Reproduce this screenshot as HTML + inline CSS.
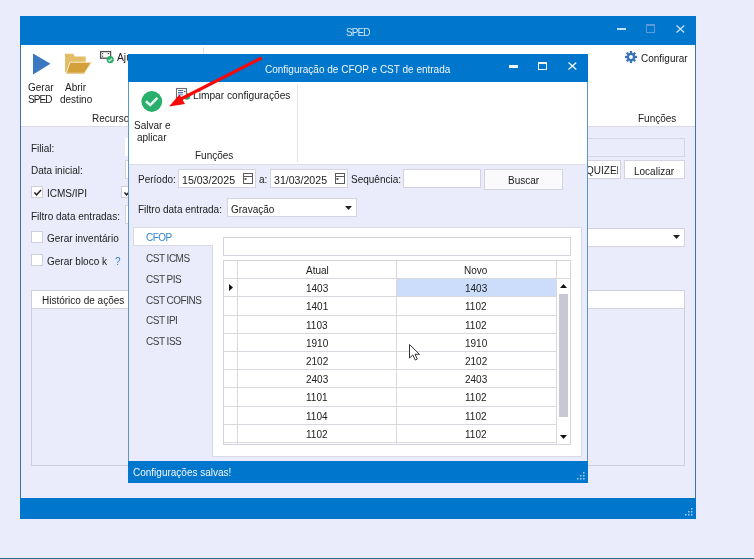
<!DOCTYPE html>
<html><head><meta charset="utf-8">
<style>
*{box-sizing:border-box;margin:0;padding:0}
html,body{width:754px;height:559px;overflow:hidden;background:#EAECFB;font-family:"Liberation Sans",sans-serif;font-size:10px;color:#202020}
.a{position:absolute}
.t{position:absolute;white-space:nowrap;line-height:14px;will-change:transform}
.tb{position:absolute;background:#fff;border:1px solid #D4D4E0}
.cb{position:absolute;width:12px;height:12px;background:#fff;border:1px solid #CFCFDC}
</style></head><body>

<!-- bottom taskbar line -->
<div class="a" style="left:0;top:558px;width:754px;height:1px;background:#2A6F9A"></div>

<!-- MAIN WINDOW -->
<div class="a" style="left:20px;top:16px;width:676px;height:503px;background:#EAECFB;border:1px solid #3E72A8"></div>
<div class="a" style="left:20px;top:16px;width:676px;height:29px;background:#0076CC"></div>
<div class="t" style="left:346px;top:25.5px;color:#CFE4F7;font-size:10px;letter-spacing:-0.9px">SPED</div>
<!-- window buttons -->
<div class="a" style="left:617px;top:27.5px;width:9px;height:2.5px;background:#BFE0FA"></div>
<div class="a" style="left:646px;top:24px;width:9px;height:9px;border:1px solid #5C9BD8;border-top-width:2px"></div>
<svg class="a" style="left:676px;top:25px" width="9" height="8"><path d="M0.5 0.5L8.2 7.5M8.2 0.5L0.5 7.5" stroke="#C6E2F8" stroke-width="1.3"/></svg>

<!-- main ribbon -->
<div class="a" style="left:21px;top:45px;width:674px;height:82px;background:#fff;border-bottom:1px solid #DCDCE8"></div>
<div class="a" style="left:203px;top:47px;width:1px;height:77px;background:#E2E2EA"></div>
<!-- play icon -->
<svg class="a" style="left:33px;top:53px" width="18" height="22"><path d="M0 0.5L17.5 10.8L0 21.5Z" fill="#3B78C2"/></svg>
<div class="t" style="left:28px;top:81px">Gerar</div>
<div class="t" style="left:28px;top:93px;letter-spacing:-0.9px">SPED</div>
<!-- folder icon -->
<svg class="a" style="left:64px;top:53px" width="29" height="21">
<path d="M1 0.7H9.5L10.5 3.6H21.7V10H1Z" fill="#E3BD68"/>
<path d="M1 2H9V19H1Z" fill="#E3BD68"/>
<path d="M6 9.2H27.6L20.6 20H2.2Z" fill="#D3A03A" stroke="#FFF6E0" stroke-width="0.9" stroke-linejoin="round"/>
<path d="M20.6 20H2.2" stroke="#D3A03A" stroke-width="1"/>
</svg>
<div class="t" style="left:65px;top:81px">Abrir</div>
<div class="t" style="left:60px;top:93px">destino</div>
<!-- ajuste icon -->
<svg class="a" style="left:99px;top:50px" width="16" height="15">
<rect x="1.6" y="1.6" width="10" height="6.6" fill="#fff" stroke="#505050" stroke-width="1.3"/>
<rect x="3" y="3" width="1.2" height="1.2" fill="#555"/><rect x="3" y="5.6" width="1.2" height="1.2" fill="#555"/><rect x="8.8" y="3" width="1.2" height="1.2" fill="#555"/>
<circle cx="11.2" cy="9.6" r="3.6" fill="#2EAD6A"/>
<path d="M9.4 9.8L10.7 11L13 8.6" stroke="#D8F5E4" stroke-width="1.1" fill="none"/>
</svg>
<div class="t" style="left:116.5px;top:51px;font-size:10.3px">Aju</div>
<div class="t" style="left:92px;top:111.5px">Recursos</div>
<!-- configurar -->
<svg class="a" style="left:624px;top:50px" width="14" height="14"><g transform="translate(7 7)"><circle r="4" fill="#3A72B8"/><rect x="-1.2" y="-6" width="2.4" height="3" fill="#3A72B8" transform="rotate(0)"/><rect x="-1.2" y="-6" width="2.4" height="3" fill="#3A72B8" transform="rotate(45)"/><rect x="-1.2" y="-6" width="2.4" height="3" fill="#3A72B8" transform="rotate(90)"/><rect x="-1.2" y="-6" width="2.4" height="3" fill="#3A72B8" transform="rotate(135)"/><rect x="-1.2" y="-6" width="2.4" height="3" fill="#3A72B8" transform="rotate(180)"/><rect x="-1.2" y="-6" width="2.4" height="3" fill="#3A72B8" transform="rotate(225)"/><rect x="-1.2" y="-6" width="2.4" height="3" fill="#3A72B8" transform="rotate(270)"/><rect x="-1.2" y="-6" width="2.4" height="3" fill="#3A72B8" transform="rotate(315)"/><circle r="1.9" fill="#fff"/></g></svg>
<div class="t" style="left:641px;top:52px">Configurar</div>
<div class="t" style="left:638px;top:112px">Funções</div>

<!-- main body controls -->
<div class="t" style="left:31px;top:142px">Filial:</div>
<div class="t" style="left:31px;top:164px">Data inicial:</div>
<div class="cb" style="left:31px;top:186px"></div>
<svg class="a" style="left:33px;top:189px" width="9" height="7"><path d="M1.4 3.4L3.6 5.8L8 1" stroke="#222" stroke-width="1.5" fill="none"/></svg>
<div class="t" style="left:47px;top:187px">ICMS/IPI</div>
<div class="cb" style="left:121px;top:186px"></div>
<svg class="a" style="left:123px;top:189px" width="9" height="7"><path d="M1.4 3.4L3.6 5.8L8 1" stroke="#222" stroke-width="1.5" fill="none"/></svg>
<div class="t" style="left:31px;top:210px">Filtro data entradas:</div>
<div class="tb" style="left:125px;top:205px;width:10px;height:19px"></div>
<div class="cb" style="left:31px;top:231px"></div>
<div class="t" style="left:47px;top:232px">Gerar inventário</div>
<div class="cb" style="left:31px;top:254px"></div>
<div class="t" style="left:47px;top:255px">Gerar bloco k</div>
<div class="t" style="left:115px;top:255px;color:#2F7FD0">?</div>
<div class="tb" style="left:125px;top:138px;width:10px;height:18px;border-color:#fff"></div>
<div class="tb" style="left:125px;top:160px;width:10px;height:19px"></div>

<div class="a" style="left:580px;top:138px;width:105px;height:19px;background:#EAECFB;border:1px solid #D6D6E2"></div>
<div class="tb" style="left:560px;top:160px;width:61px;height:19px"></div>
<div class="a" style="left:561px;top:161px;width:57px;height:17px;overflow:hidden"><div class="t" style="left:25px;top:3px">QUIZEN</div></div>
<div class="a" style="left:624px;top:160px;width:61px;height:19px;background:#fff;border:1px solid #D4D4E0"></div>
<div class="t" style="left:634px;top:165px">Localizar</div>
<div class="tb" style="left:560px;top:228px;width:125px;height:19px"></div>
<svg class="a" style="left:673px;top:235px" width="8" height="4"><path d="M0 0H7L3.5 4Z" fill="#222"/></svg>

<!-- historico -->
<div class="a" style="left:31px;top:290px;width:654px;height:176px;border:1px solid #CFCFDB;background:#EAECFB"></div>
<div class="a" style="left:32px;top:291px;width:652px;height:18px;background:#fff;border-bottom:1px solid #D6D6E2"></div>
<div class="t" style="left:42px;top:294px">Histórico de ações</div>

<!-- main status bar -->
<div class="a" style="left:20px;top:498px;width:676px;height:21px;background:#0076CC"></div>

<!-- DIALOG -->
<div class="a" style="left:128px;top:54px;width:460px;height:429px;background:#EAECFB;border:1px solid #5A96D2"></div>
<div class="a" style="left:128px;top:54px;width:460px;height:28px;background:#0076CC"></div>
<div class="t" style="left:265px;top:63px;color:#F2F7FC">Configuração de CFOP e CST de entrada</div>
<div class="a" style="left:508.5px;top:65px;width:9px;height:2.8px;background:#F0F6FC"></div>
<div class="a" style="left:538px;top:61.5px;width:9px;height:8.5px;border:1px solid #F0F6FC;border-top-width:2px"></div>
<svg class="a" style="left:568px;top:62px" width="9" height="8"><path d="M0.5 0.5L8.3 7.5M8.3 0.5L0.5 7.5" stroke="#F0F6FC" stroke-width="1.3"/></svg>

<!-- dialog ribbon -->
<div class="a" style="left:129px;top:82px;width:458px;height:83px;background:#fff;border-bottom:1px solid #DCDCE8"></div>
<div class="a" style="left:297px;top:84px;width:1px;height:78px;background:#E2E2EA"></div>
<svg class="a" style="left:141px;top:90px" width="23" height="23"><circle cx="10.8" cy="11.5" r="10.4" fill="#28AF6C"/><path d="M4.9 11.2L9.2 15.1L16.4 7.8" stroke="#E6FAF0" stroke-width="2.5" fill="none"/></svg>
<div class="t" style="left:134px;top:119px">Salvar e</div>
<div class="t" style="left:137px;top:131px">aplicar</div>
<svg class="a" style="left:175px;top:87px" width="16" height="14">
<circle cx="12" cy="9.5" r="3.2" fill="#2EAD6A"/>
<rect x="1.5" y="1.5" width="10" height="10" fill="#fff" stroke="#6E6E6E" stroke-width="1.1"/>
<path d="M3 3.5H8.2M3 5.5H8.2" stroke="#4F6E9A" stroke-width="1"/>
<rect x="3" y="6.5" width="5.2" height="2" fill="#8FA8D4"/>
<rect x="9.2" y="4" width="1.2" height="1.2" fill="#333"/>
</svg>
<div class="t" style="left:193px;top:89px;font-size:10.2px">Limpar configurações</div>
<div class="t" style="left:195px;top:149px">Funções</div>

<!-- dialog form -->
<div class="t" style="left:138px;top:173px">Período:</div>
<div class="tb" style="left:178px;top:169px;width:78px;height:19px"></div>
<div class="t" style="left:182px;top:172.5px;font-size:10.6px">15/03/2025</div>
<svg class="a" style="left:243px;top:173px" width="11" height="11"><rect x="0.5" y="0.5" width="9" height="10" fill="none" stroke="#5A5A5A"/><path d="M0.5 3.5H9.5" stroke="#5A5A5A"/><rect x="1.5" y="5" width="2" height="2" fill="#5A5A5A"/></svg>
<div class="t" style="left:259px;top:173px">a:</div>
<div class="tb" style="left:270px;top:169px;width:78px;height:19px"></div>
<div class="t" style="left:274px;top:172.5px;font-size:10.6px">31/03/2025</div>
<svg class="a" style="left:335px;top:173px" width="11" height="11"><rect x="0.5" y="0.5" width="9" height="10" fill="none" stroke="#5A5A5A"/><path d="M0.5 3.5H9.5" stroke="#5A5A5A"/><rect x="1.5" y="5" width="2" height="2" fill="#5A5A5A"/></svg>
<div class="t" style="left:351px;top:173px">Sequência:</div>
<div class="tb" style="left:403px;top:169px;width:78px;height:19px"></div>
<div class="a" style="left:484px;top:169px;width:79px;height:21px;background:#FAFAFD;border:1px solid #D4D4E0"></div>
<div class="t" style="left:508px;top:174px">Buscar</div>
<div class="t" style="left:138px;top:203px">Filtro data entrada:</div>
<div class="tb" style="left:227px;top:198px;width:130px;height:19px"></div>
<div class="t" style="left:231px;top:203px">Gravação</div>
<svg class="a" style="left:345px;top:206px" width="8" height="4"><path d="M0 0H7L3.5 4Z" fill="#222"/></svg>

<!-- tabs -->
<div class="a" style="left:212px;top:227px;width:370px;height:230px;background:#fff;border:1px solid #DADAE6"></div>
<div class="a" style="left:133px;top:227px;width:80px;height:19px;background:#fff;border:1px solid #DADAE6;border-right:none"></div>
<div class="t" style="left:146px;top:231px;letter-spacing:-0.5px;color:#2E86D2">CFOP</div>
<div class="t" style="left:146px;top:252px;letter-spacing:-0.5px;color:#3C3C3C">CST ICMS</div>
<div class="t" style="left:146px;top:273px;letter-spacing:-0.5px;color:#3C3C3C">CST PIS</div>
<div class="t" style="left:146px;top:294px;letter-spacing:-0.5px;color:#3C3C3C">CST COFINS</div>
<div class="t" style="left:146px;top:314px;letter-spacing:-0.5px;color:#3C3C3C">CST IPI</div>
<div class="t" style="left:146px;top:335px;letter-spacing:-0.5px;color:#3C3C3C">CST ISS</div>

<div class="tb" style="left:223px;top:237px;width:348px;height:19px"></div>

<!-- grid -->
<div class="a" style="left:223px;top:260px;width:348px;height:185px;background:#fff;border:1px solid #D4D4DA"></div>
<div class="a" style="left:224px;top:261px;width:346px;height:17px;background:#fff"></div>
<div class="t" style="left:306px;top:264px">Atual</div>
<div class="t" style="left:464px;top:264px">Novo</div>
<div class="a" style="left:397px;top:278px;width:159px;height:18px;background:#CCDDFB"></div>
<div class="t" style="left:306px;top:282px">1403</div>
<div class="t" style="left:465px;top:282px">1403</div>
<div class="t" style="left:306px;top:300px">1401</div>
<div class="t" style="left:465px;top:300px">1102</div>
<div class="t" style="left:306px;top:319px">1103</div>
<div class="t" style="left:465px;top:319px">1102</div>
<div class="t" style="left:306px;top:337px">1910</div>
<div class="t" style="left:465px;top:337px">1910</div>
<div class="t" style="left:306px;top:355px">2102</div>
<div class="t" style="left:465px;top:355px">2102</div>
<div class="t" style="left:306px;top:373px">2403</div>
<div class="t" style="left:465px;top:373px">2403</div>
<div class="t" style="left:306px;top:391px">1101</div>
<div class="t" style="left:465px;top:391px">1102</div>
<div class="t" style="left:306px;top:410px">1104</div>
<div class="t" style="left:465px;top:410px">1102</div>
<div class="t" style="left:306px;top:428px">1102</div>
<div class="t" style="left:465px;top:428px">1102</div>
<div class="a" style="left:224px;top:278px;width:332px;height:1px;background:#D8D8DE"></div>
<div class="a" style="left:224px;top:296px;width:332px;height:1px;background:#D8D8DE"></div>
<div class="a" style="left:224px;top:315px;width:332px;height:1px;background:#D8D8DE"></div>
<div class="a" style="left:224px;top:333px;width:332px;height:1px;background:#D8D8DE"></div>
<div class="a" style="left:224px;top:351px;width:332px;height:1px;background:#D8D8DE"></div>
<div class="a" style="left:224px;top:369px;width:332px;height:1px;background:#D8D8DE"></div>
<div class="a" style="left:224px;top:387px;width:332px;height:1px;background:#D8D8DE"></div>
<div class="a" style="left:224px;top:406px;width:332px;height:1px;background:#D8D8DE"></div>
<div class="a" style="left:224px;top:424px;width:332px;height:1px;background:#D8D8DE"></div>
<div class="a" style="left:224px;top:442px;width:332px;height:1px;background:#D8D8DE"></div>
<div class="a" style="left:237px;top:261px;width:1px;height:183px;background:#D8D8DE"></div>
<div class="a" style="left:396px;top:261px;width:1px;height:183px;background:#D8D8DE"></div>
<div class="a" style="left:556px;top:261px;width:1px;height:183px;background:#D8D8DE"></div>
<svg class="a" style="left:229px;top:284px" width="4" height="7"><path d="M0 0L4 3.5L0 7Z" fill="#111"/></svg>
<div class="a" style="left:557px;top:279px;width:13px;height:165px;background:#fff"></div>
<div class="a" style="left:557px;top:278px;width:13px;height:1px;background:#D8D8DE"></div>
<svg class="a" style="left:560px;top:284px" width="8" height="4"><path d="M0 4H7L3.5 0Z" fill="#111"/></svg>
<div class="a" style="left:559px;top:294px;width:9px;height:123px;background:#C8C8D4"></div>
<svg class="a" style="left:560px;top:435px" width="8" height="4"><path d="M0 0H7L3.5 4Z" fill="#111"/></svg>
<svg class="a" style="left:408px;top:343px" width="13" height="18"><path d="M1.5 1.5V15L4.8 12L7.3 17L9.3 16L7 11.3H11.5Z" fill="#fff" stroke="#333" stroke-width="1"/></svg>

<!-- dialog status -->
<div class="a" style="left:128px;top:461px;width:460px;height:22px;background:#0076CC"></div>
<div class="t" style="left:133px;top:466px;color:#F2F7FC">Configurações salvas!</div>

<svg class="a" style="left:577px;top:472px" width="8" height="8"><rect x="6" y="0" width="1.5" height="1.5" fill="#A9CDEE"/><rect x="3" y="3" width="1.5" height="1.5" fill="#A9CDEE"/><rect x="6" y="3" width="1.5" height="1.5" fill="#A9CDEE"/><rect x="0" y="6" width="1.5" height="1.5" fill="#A9CDEE"/><rect x="3" y="6" width="1.5" height="1.5" fill="#A9CDEE"/><rect x="6" y="6" width="1.5" height="1.5" fill="#A9CDEE"/></svg>
<svg class="a" style="left:685px;top:508px" width="8" height="8"><rect x="6" y="0" width="1.5" height="1.5" fill="#A9CDEE"/><rect x="3" y="3" width="1.5" height="1.5" fill="#A9CDEE"/><rect x="6" y="3" width="1.5" height="1.5" fill="#A9CDEE"/><rect x="0" y="6" width="1.5" height="1.5" fill="#A9CDEE"/><rect x="3" y="6" width="1.5" height="1.5" fill="#A9CDEE"/><rect x="6" y="6" width="1.5" height="1.5" fill="#A9CDEE"/></svg>
<!-- red arrow -->
<svg class="a" style="left:0;top:0" width="754" height="559">
<path d="M260.5 58.5L177 101" stroke="#F80808" stroke-width="3.2" stroke-linecap="round"/>
<path d="M169 106.5L179.5 94.5L185 104Z" fill="#F80808"/>
</svg>

</body></html>
